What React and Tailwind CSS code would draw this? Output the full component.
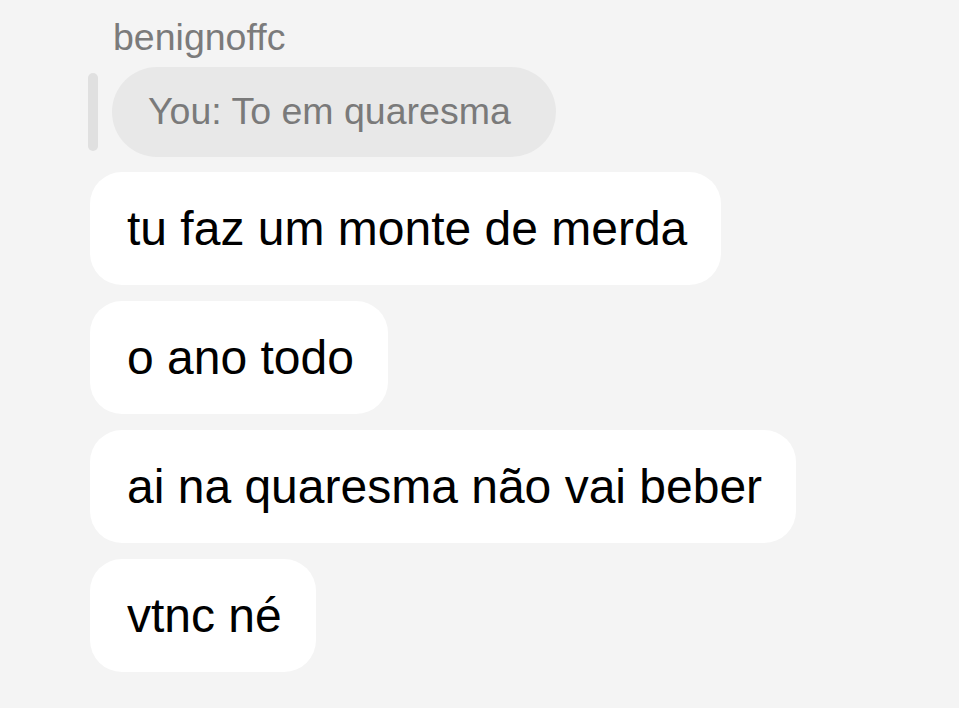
const messages = [
  'tu faz um monte de merda',
  'o ano todo',
  'ai na quaresma não vai beber',
  'vtnc né',
];

export default function App() {
  return (
    <div
      className="min-h-screen w-full overflow-hidden bg-[#f4f4f4] pl-[88px] pt-[15px]"
      style={{ fontFamily: '"Liberation Sans", Arial, sans-serif' }}
    >
      {/* sender name */}
      <div className="pl-[25px] text-[37.5px] leading-[44px] text-[#7b7b7b]">benignoffc</div>

      {/* replied-to message */}
      <div className="mt-2 flex items-center gap-[14px]">
        <div className="h-[78px] w-[10px] rounded-full bg-[#e0e0e0]" />
        <div className="flex h-[90px] items-center rounded-full bg-[#e8e8e8] pl-[36px] pr-[45px] text-[37.5px] leading-none text-[#7a7a7a]">
          You: To em quaresma
        </div>
      </div>

      {/* incoming bubbles */}
      <div className="mt-[15px] flex flex-col items-start gap-4 pl-[2px]">
        {messages.map((m) => (
          <div
            key={m}
            className="flex h-[113px] items-center rounded-[32px] bg-white pl-[37px] pr-[34px] text-[48px] leading-none text-black"
          >
            {m}
          </div>
        ))}
      </div>
    </div>
  );
}
